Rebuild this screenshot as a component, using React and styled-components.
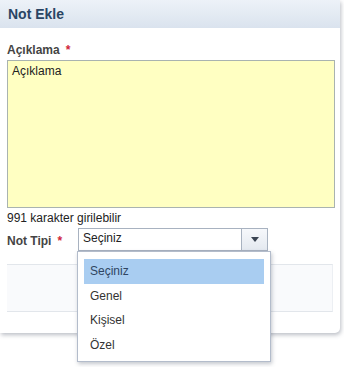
import React from 'react';
import styled, { createGlobalStyle } from 'styled-components';

const Global = createGlobalStyle`
  html, body {
    margin: 0;
    padding: 0;
    background: #ffffff;
    font-family: "Liberation Sans", Arial, sans-serif;
  }
`;

const Page = styled.div`
  width: 344px;
  height: 367px;
  overflow: visible;
`;

const Panel = styled.div`
  position: relative;
  width: 340px;
  background: #ffffff;
  border-bottom-right-radius: 5px;
  box-shadow: 1px 2px 4px rgba(60, 70, 90, 0.35);
  padding-bottom: 21px;
`;

const Header = styled.div`
  height: 28px;
  display: flex;
  align-items: center;
  padding-left: 8px;
  background: linear-gradient(#edf2f8, #dae3ee);
  color: #2a4564;
  font-size: 14px;
  font-weight: bold;
`;

const Body = styled.div`
  padding: 15px 7px 0;
`;

const Label = styled.div`
  font-size: 12px;
  font-weight: bold;
  color: #444;
  line-height: 15px;
  white-space: nowrap;
`;

const Star = styled.span`
  color: #d0263a;
  margin-left: 6px;
`;

const TextArea = styled.div`
  margin-top: 2px;
  height: 140px;
  width: 318px;
  background: #ffffc2;
  border: 1px solid #a9b3b0;
  padding: 3px 4px;
  font-size: 12px;
  color: #222;
`;

const Hint = styled.div`
  margin-top: 3px;
  font-size: 12px;
  color: #222;
  line-height: 15px;
`;

const Row = styled.div`
  margin-top: 2px;
  display: flex;
  align-items: center;
`;

const RowLabel = styled(Label)`
  width: 71px;
  padding-top: 4px;
`;

const SelectWrap = styled.div`
  position: relative;
`;

const Select = styled.div`
  width: 188px;
  height: 21px;
  display: flex;
  border: 1px solid #a8b2c0;
  background: #fff;
  font-size: 12px;
  color: #222;
`;

const SelectText = styled.div`
  flex: 1;
  padding-left: 4px;
  line-height: 19px;
`;

const Arrow = styled.div`
  width: 25px;
  border-left: 1px solid #a8b2c0;
  background: linear-gradient(#f6f8fb, #e4e9f0);
  display: flex;
  align-items: center;
  justify-content: center;
`;

const Menu = styled.div`
  position: absolute;
  left: -1px;
  top: 23px;
  width: 180px;
  padding: 7px 6px 4px;
  background: #fff;
  border: 1px solid #b3bccb;
  box-shadow: 1px 2px 4px rgba(60, 70, 90, 0.3);
  z-index: 5;
`;

const Item = styled.div`
  height: 24.5px;
  line-height: 24.5px;
  padding-left: 6px;
  font-size: 12px;
  color: ${p => (p.$active ? '#2f4562' : '#333')};
  background: ${p => (p.$active ? '#a9cdf1' : 'transparent')};
`;

const Footer = styled.div`
  margin: 13px 7px 0;
  height: 46px;
  background: #f9fafc;
  border-top: 1px solid #e2e6eb;
  border-bottom: 1px solid #e2e6eb;
  border-right: 1px solid #eceff3;
`;

const items = ['Seçiniz', 'Genel', 'Kişisel', 'Özel'];

export default function App() {
  return (
    <Page>
      <Global />
      <Panel>
        <Header>Not Ekle</Header>
        <Body>
          <Label>
            Açıklama<Star>*</Star>
          </Label>
          <TextArea>Açıklama</TextArea>
          <Hint>991 karakter girilebilir</Hint>
          <Row>
            <RowLabel>
              Not Tipi<Star>*</Star>
            </RowLabel>
            <SelectWrap>
              <Select>
                <SelectText>Seçiniz</SelectText>
                <Arrow>
                  <svg width="8" height="5" viewBox="0 0 8 5">
                    <path d="M0 0 L8 0 L4 5 Z" fill="#3a4452" />
                  </svg>
                </Arrow>
              </Select>
              <Menu>
                {items.map((t, i) => (
                  <Item key={t} $active={i === 0}>
                    {t}
                  </Item>
                ))}
              </Menu>
            </SelectWrap>
          </Row>
        </Body>
        <Footer />
      </Panel>
    </Page>
  );
}
